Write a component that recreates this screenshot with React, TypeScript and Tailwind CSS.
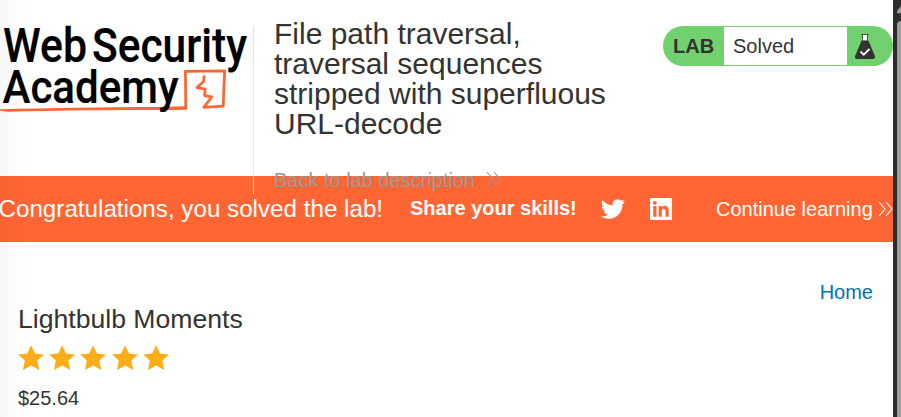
import React from 'react';

function Logo() {
  return (
    <svg width="250" height="100" viewBox="0 20 250 100" className="block shrink-0 overflow-visible" aria-label="Web Security Academy">
      <path d="M0 109.3 C50 108 105 107.2 158 107 L185 106.3 L186.6 109.7 L170 110 C110 110 60 110.4 8 111.8 L0 110.8Z" fill="#ff6633" />
      <path
        d="M185.8 109.5 L185.4 71.4 L224.6 70.8 L223.2 106.2 L203.8 107.4 L211.8 96.8 L204.6 95.6 L205.2 89.2 L197 87.6 L203.6 81.4 L204.2 75.5"
        fill="none"
        stroke="#ff6633"
        strokeWidth="2.8"
        strokeLinejoin="round"
      />
      <g fill="#000" stroke="#000" strokeWidth="0.2" fontFamily="Roboto, sans-serif" fontWeight="500" fontSize="48">
        <text x="3" y="62" textLength="84" lengthAdjust="spacingAndGlyphs">Web</text>
        <text x="92" y="62" textLength="155" lengthAdjust="spacingAndGlyphs">Security</text>
        <text x="2.5" y="102.5" fontSize="47" textLength="176" lengthAdjust="spacingAndGlyphs">Academy</text>
      </g>
    </svg>
  );
}

function Chevrons({ className }: { className: string }) {
  return (
    <svg width="15" height="16" viewBox="0 0 15 16" fill="none" stroke="currentColor" strokeWidth="1.1" className={className}>
      <path d="M1 1 7 8 1 15M8 1 14 8 8 15" />
    </svg>
  );
}

function LabStatus() {
  return (
    <div className="mt-[26px] flex h-10 w-[230px] shrink-0 overflow-hidden rounded-[20px] bg-[#70d16e] text-xl leading-10 text-[#333332]">
      <span className="w-[61px] pl-[10px] font-bold">LAB</span>
      <span className="my-px h-[38px] w-[123px] bg-white pl-[9px] leading-[38px]">Solved</span>
      <svg width="22" height="27" viewBox="0 0 22 27" className="mt-[7px] ml-[7px]">
        <path d="M8.5 1.5h5V7.5h-5z" fill="#fff" />
        <path d="M7 1.5h8M8.5 1.5v6M13.5 1.5v6" stroke="#333332" strokeWidth="0.8" />
        <path d="M7.6 7.5h6.8l6.4 15.2q1 3.1-2 3.3H3.2q-3-.2-2-3.3Z" fill="#333332" />
        <path d="m6.5 18.5 3.2 3.2 5.8-5.7" fill="none" stroke="#fff" strokeWidth="1.8" />
      </svg>
    </div>
  );
}

function Header() {
  return (
    <header className="relative z-10 flex h-[176px] justify-between">
      <div className="flex">
        <div className="w-[253px] pt-5">
          <Logo />
        </div>
        <div className="mt-[26px] h-[168px] w-[353px] border-l border-[#e5e5e5] pl-5">
          <h2 className="-mt-[7px] w-[340px] text-[30px] leading-[30px]">
            File path traversal, traversal sequences stripped with superfluous URL-decode
          </h2>
          <a className="mt-[26px] flex items-center text-xl leading-[30px] text-[#999]">
            Back to lab description
            <Chevrons className="ml-[11px] -mt-[2px]" />
          </a>
        </div>
      </div>
      <LabStatus />
    </header>
  );
}

function Banner() {
  return (
    <section className="flex h-[66px] items-center overflow-hidden bg-[#ff6633] whitespace-nowrap text-white">
      <h4 className="-ml-[1.5px] w-[411.5px] shrink-0 text-[24.2px]">Congratulations, you solved the lab!</h4>
      <span className="-mt-[2px] w-[191px] shrink-0 text-xl font-bold">Share your skills!</span>
      <svg width="24" height="24" viewBox="0 0 24 24" fill="currentColor" className="shrink-0">
        <path d="M23.95 4.57a10 10 0 0 1-2.82.77 4.96 4.96 0 0 0 2.16-2.72c-.95.55-2 .95-3.13 1.18a4.92 4.92 0 0 0-8.38 4.48A13.93 13.93 0 0 1 1.64 3.16a4.92 4.92 0 0 0 1.52 6.57 4.9 4.9 0 0 1-2.23-.61v.06a4.92 4.92 0 0 0 3.95 4.83 5 5 0 0 1-2.21.08 4.94 4.94 0 0 0 4.6 3.42A9.87 9.87 0 0 1 0 19.54a13.99 13.99 0 0 0 7.55 2.21c9.05 0 14-7.5 14-13.98 0-.21 0-.42-.02-.63a9.94 9.94 0 0 0 2.42-2.57Z" />
      </svg>
      <svg width="24" height="24" viewBox="0 0 24 24" fill="currentColor" className="ml-6 shrink-0">
        <path fillRule="evenodd" d="M2 1h20q1 0 1 1v20q0 1-1 1H2q-1 0-1-1V2q0-1 1-1ZM4.2 9v10.7h3.3V9H4.2ZM5.85 4a1.9 1.9 0 1 0 0 3.8 1.9 1.9 0 0 0 0-3.8ZM9.6 9v10.7h3.2v-5.3c0-3.6 3.7-3.6 3.7 0v5.3h3.3v-6c0-5.7-5-6-7-3.1V9H9.6Z" />
      </svg>
      <a className="ml-[43px] flex items-center text-xl">
        Continue learning
        <Chevrons className="ml-[5px] shrink-0" />
      </a>
    </section>
  );
}

function Stars() {
  return (
    <div className="mt-[11px] flex gap-[5px]">
      {[0, 1, 2, 3, 4].map((n) => (
        <svg key={n} width="26.2" height="26" viewBox="0 0 26 26" fill="#ffad16">
          <path d="m13 .3 3.9 8.1 9 1-6.6 6.2 1.8 9.4-8.1-4.6L4.9 25l1.8-9.4L.1 9.4l9-1Z" />
        </svg>
      ))}
    </div>
  );
}

export default function App() {
  return (
    <div className="flex h-[417px] w-[901px] overflow-hidden bg-white font-['Liberation_Sans',Arial,sans-serif] text-[#333332]">
      <main className="relative w-[893px] shrink-0">
        <Header />
        <Banner />
        <nav className="flex justify-end pt-[35px] pr-5 text-xl leading-[30px] text-[#0071bc]">
          <a>Home</a>
        </nav>
        <section className="pl-[18px]">
          <h3 className="-mt-[3px] text-[26.6px] leading-[30px]">Lightbulb Moments</h3>
          <Stars />
          <div className="mt-[14px] text-xl leading-[26px]">$25.64</div>
        </section>
        <div className="pointer-events-none absolute inset-y-0 left-0 z-20 w-7 bg-linear-to-r from-black/3 to-transparent" />
      </main>
      <aside className="w-1 bg-[#2c2c2c]" />
      <aside className="flex w-1 flex-col bg-[#2c2c2c]">
        <svg width="4" height="14" viewBox="0 0 4 14" fill="#a0a0a0">
          <path d="M4 6 0 11v1.5q0 .8 1 .8h3Z" />
        </svg>
        <div className="mt-[7px] flex-1 rounded-tl bg-[#9f9f9f]" />
      </aside>
    </div>
  );
}
